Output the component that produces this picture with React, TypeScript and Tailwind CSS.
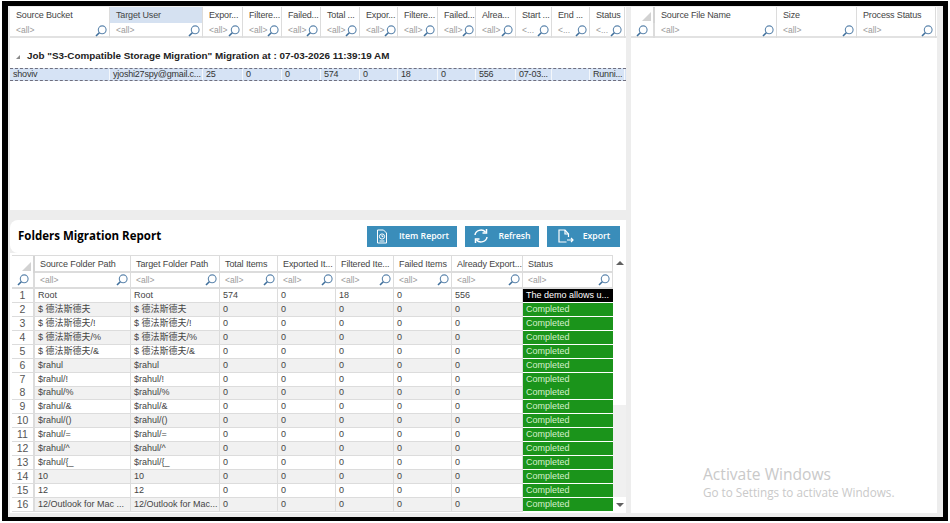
import React from "react";

const Mag = () => (
  <svg width="12" height="12" viewBox="0 0 12 12" className="shrink-0" fill="none">
    <circle cx="7.2" cy="4.8" r="3.9" stroke="#5d86ad" strokeWidth="1.1" />
    <line x1="4.3" y1="7.7" x2="1" y2="11" stroke="#3f6f9c" strokeWidth="1.6" />
  </svg>
);

const Corner = () => (
  <div className="flex h-full items-end justify-end pb-[2px] pr-[2px]">
    <div className="h-0 w-0 border-b-[9px] border-l-[9px] border-b-[#d2d2d2] border-l-transparent" />
  </div>
);

const Head = ({ t, active }: { t: string; active?: boolean }) => (
  <div className={`overflow-hidden whitespace-nowrap border-r border-[#dcdcdc] pl-[6px] leading-[16px] tracking-[-0.15px] text-[#444] ${active ? "bg-[#d5e1f1]" : ""}`}>{t}</div>
);

const Filter = ({ t = "<all>" }: { t?: string }) => (
  <div className="flex items-center justify-between overflow-hidden border-r border-[#dcdcdc] pl-[6px] pr-[2px] text-[#9a9a9a]">
    <span className="text-[8.5px]">{t}</span>
    <Mag />
  </div>
);

const topHeads = ["Source Bucket", "Target User", "Expor...", "Filtere...", "Failed...", "Total ...", "Expor...", "Filtere...", "Failed...", "Alrea...", "Start ...", "End ...", "Status"];
const topRow = ["shoviv", "yjoshi27spy@gmail.c...", "25", "0", "0", "574", "0", "18", "0", "556", "07-03...", "", "Runni..."];
const topFilters = ["<all>", "<all>", "<all>", "<all>", "<all>", "<all>", "<all>", "<all>", "<all>", "<all>", "<...", "<...", "<..."];

const reportHeads = ["Source Folder Path", "Target Folder Path", "Total Items", "Exported It...", "Filtered Ite...", "Failed Items", "Already Export...", "Status"];
const cjk = "$ 德法斯德夫";
const paths: [string, string][] = [
  ["Root", "Root"],
  [cjk, cjk],
  [cjk + "/!", cjk + "/!"],
  [cjk + "/%", cjk + "/%"],
  [cjk + "/&", cjk + "/&"],
  ["$rahul", "$rahul"],
  ["$rahul/!", "$rahul/!"],
  ["$rahul/%", "$rahul/%"],
  ["$rahul/&", "$rahul/&"],
  ["$rahul/()", "$rahul/()"],
  ["$rahul/=", "$rahul/="],
  ["$rahul/^", "$rahul/^"],
  ["$rahul/{_", "$rahul/{_"],
  ["10", "10"],
  ["12", "12"],
  ["12/Outlook for Mac ...", "12/Outlook for Mac..."],
];

const cols = "grid grid-cols-[23px_96px_89px_58px_58px_58px_58px_71px_90px]";
const font = "font-['Liberation_Sans','Noto_Sans_CJK_SC',sans-serif]";

const Btn = ({ label, w, gap, children }: { label: string; w: string; gap: string; children: React.ReactNode }) => (
  <div className={`flex h-[21px] items-center justify-center ${w} ${gap} bg-[#3a8dba] text-[8.7px] font-semibold text-white font-['Open_Sans',sans-serif]`}>
    {children}
    <span className="pt-[2px]">{label}</span>
  </div>
);

export default function App() {
  return (
    <div className={`h-[523px] w-[950px] overflow-hidden bg-white pb-[2px] pl-[2px] pr-[2px] pt-[1px] text-[9px] ${font}`}>
      <div className="relative flex h-full gap-[5px] border-b-[4px] border-l-[6px] border-r-[5px] border-t-[5px] border-black bg-[#ededed] pb-[4px] pl-[2px] pr-[6px] pt-[1px]">
        {/* left column */}
        <div className="flex w-[616px] flex-col">
          <div className="h-[203px] bg-white">
            <div className="grid h-[31px] grid-cols-[100px_93px_40px_39px_39px_39px_38px_40px_38px_40px_36px_38px_35px] grid-rows-[16px_15px] border-b-2 border-[#e2e2e2]">
              {topHeads.map((h, i) => (
                <Head key={i} t={h} active={i === 1} />
              ))}
              {topFilters.map((f, i) => (
                <Filter key={i} t={f} />
              ))}
            </div>
            <div className="flex h-[30px] items-center pl-[6px] pt-[7px]">
              <div className="mr-[7px] h-0 w-0 border-b-[4px] border-l-[4px] border-b-[#8a8a8a] border-l-transparent" />
              <span className="text-[9.87px] font-bold text-[#222]">Job "S3-Compatible Storage Migration" Migration at : 07-03-2026 11:39:19 AM</span>
            </div>
            <div className="grid h-[13px] grid-cols-[100px_93px_40px_39px_39px_39px_38px_40px_38px_40px_36px_38px_35px] border-y border-dashed border-[#6f6f7f] bg-[#d6e3f5] leading-[10px] text-[#333]">
              {topRow.map((c, i) => (
                <div key={i} className="overflow-hidden whitespace-nowrap border-r border-[#f4f7fb] pl-[3px] tracking-[-0.2px]">{c}</div>
              ))}
            </div>
          </div>

          <div className="mt-[10px] flex h-[33px] items-center justify-between rounded-l-lg bg-white pl-[8px] pr-[6px]">
            <span className="pb-[2px] text-[11.5px] font-bold text-black font-['Open_Sans',sans-serif]">Folders Migration Report</span>
            <div className="mb-[1px] flex gap-[8px]">
              <Btn label="Item Report" w="w-[90px]" gap="gap-[10px]">
                <svg width="14" height="15" viewBox="0 0 14 15" fill="none" stroke="#fff" strokeWidth="1">
                  <path d="M2.5 1h6l3 3v10h-9z" />
                  <circle cx="7" cy="7.5" r="2.6" />
                  <path d="M7 6v1.6h1.3M4.5 12h5" />
                </svg>
              </Btn>
              <Btn label="Refresh" w="w-[74px]" gap="gap-[9px]">
                <svg width="16" height="16" viewBox="0 0 16 16" fill="none" stroke="#fff" strokeWidth="1.5">
                  <path d="M2 7a6 5.5 0 0 1 10.5-3" />
                  <path d="M14 9a6 5.500 0 0 1-10.500 3" />
                  <path d="M13.500 1v4h-4" />
                  <path d="M2.500 15v-4h4" />
                </svg>
              </Btn>
              <Btn label="Export" w="w-[73px]" gap="gap-[9px]">
                <svg width="17" height="15" viewBox="0 0 17 15" fill="none" stroke="#fff" strokeWidth="1.2">
                  <path d="M9.500 13H2V1h6l3.500 4v3" />
                  <path d="M8 1v4h3.500" />
                  <path d="M10 11h6M14 9l2 2-2 2" />
                </svg>
              </Btn>
            </div>
          </div>

          {/* report grid */}
          <div className="flex min-h-0 flex-1 bg-white pl-[2px] pt-[2px]">
            <div className="w-[601px] overflow-hidden">
              <div className={`${cols} grid-rows-[17px_16px] border-t border-[#dcdcdc]`}>
                <div className="border-r-2 border-[#d4d4d4]">
                  <Corner />
                </div>
                {reportHeads.map((h, i) => (
                  <div key={i} className="overflow-hidden whitespace-nowrap border-r border-b-2 border-[#dcdcdc] pl-[5px] leading-[16px] tracking-[-0.1px] text-[#444]">{h}</div>
                ))}
                <div className="flex items-center justify-center border-r-2 border-b-2 border-[#dcdcdc]">
                  <Mag />
                </div>
                {reportHeads.map((h, i) => (
                  <div key={i} className="flex items-center justify-between border-r border-b-2 border-[#dcdcdc] pl-[5px] pr-[2px] text-[8.500px] text-[#9a9a9a]">
                    <span>{"<all>"}</span>
                    <Mag />
                  </div>
                ))}
              </div>
              {paths.map((p, i) => {
                const row = i === 0 ? ["574", "0", "18", "0", "556"] : ["0", "0", "0", "0", "0"];
                const bg = i % 2 === 1 ? "bg-[#f1f1f1]" : "bg-white";
                return (
                  <div key={i} className={`${cols} h-[13.93px] text-[#444] ${bg}`}>
                    <div className="border-r-2 border-b border-[#dcdcdc] bg-white text-center text-[10.5px] leading-[13px] text-[#555]">{i + 1}</div>
                    <div className="truncate border-r border-b border-[#dcdcdc] pl-[3px] leading-[13px]">{p[0]}</div>
                    <div className="truncate border-r border-b border-[#dcdcdc] pl-[3px] leading-[13px]">{p[1]}</div>
                    {row.map((c, j) => (
                      <div key={j} className="border-r border-b border-[#dcdcdc] pl-[3px] leading-[13px]">{c}</div>
                    ))}
                    <div className={`truncate border-b border-white pl-[3px] leading-[13px] ${i === 0 ? "bg-black text-white" : "bg-[#1b941b] text-[#d5f0cc]"}`}>
                      {i === 0 ? "The demo allows u..." : "Completed"}
                    </div>
                  </div>
                );
              })}
            </div>
            {/* scrollbar */}
            <div className="flex w-[13px] flex-col">
              <div className="flex h-[16px] shrink-0 items-center justify-center">
                <div className="h-0 w-0 border-x-[4px] border-b-[4px] border-x-transparent border-b-[#606060]" />
              </div>
              <div className="h-[134px] shrink-0 bg-white" />
              <div className="flex-1 bg-[#f0f0f0]" />
              <div className="flex h-[16px] shrink-0 items-center justify-center bg-white">
                <div className="h-0 w-0 border-x-[4px] border-t-[4px] border-x-transparent border-t-[#606060]" />
              </div>
            </div>
          </div>
        </div>

        {/* right column */}
        <div className="flex-1 bg-white">
          <div className="grid h-[31px] grid-cols-[24px_122px_80px_79px] grid-rows-[16px_15px] border-b-2 border-[#e2e2e2]">
            <div className="border-r-2 border-[#d4d4d4]">
              <Corner />
            </div>
            <Head t="Source File Name" />
            <Head t="Size" />
            <Head t="Process Status" />
            <div className="flex items-center justify-center border-r-2 border-[#dcdcdc]">
              <Mag />
            </div>
            <Filter />
            <Filter />
            <Filter />
          </div>
        </div>

        {/* OS watermark over the page */}
        <div className="absolute left-[695px] top-[459px] font-['Open_Sans',sans-serif] text-[#c9c9c9]">
          <div className="text-[15.6px] leading-[18px]">Activate Windows</div>
          <div className="text-[11.7px] leading-[18px]">Go to Settings to activate Windows.</div>
        </div>
      </div>
    </div>
  );
}
